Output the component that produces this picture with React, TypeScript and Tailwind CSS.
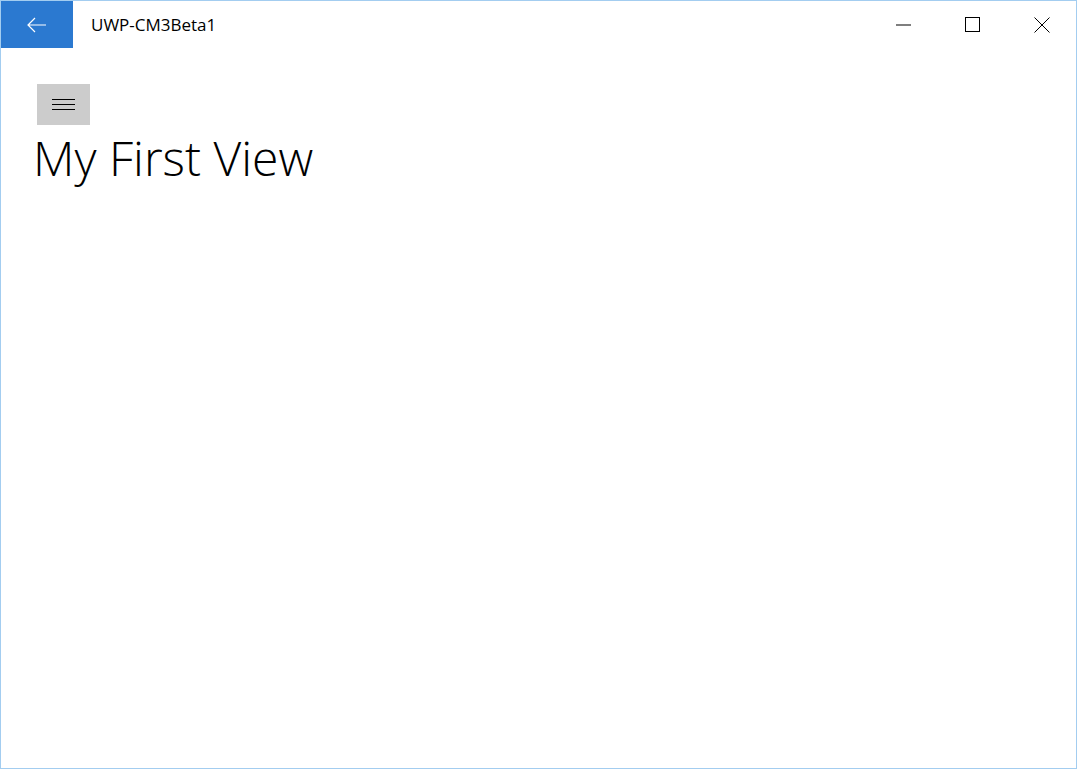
import React from 'react';

const TitleButton = ({ children }: { children: React.ReactNode }) => (
  <div className="w-[69px] h-full flex items-center justify-center">{children}</div>
);

const App = () => {
  return (
    <div className="w-[1077px] h-[769px] border border-[#a3cdf0] bg-white flex flex-col overflow-hidden" style={{ fontFamily: '"Open Sans", "Noto Sans", sans-serif' }}>
      <div className="h-[47px] flex items-stretch shrink-0">
        <div className="w-[72px] bg-[#2b79d0] flex items-center justify-center">
          <svg width="20" height="16" viewBox="0 0 20 16" fill="none" stroke="white" strokeWidth="1.2">
            <path d="M1 8h18M8 1L1 8l7 7" />
          </svg>
        </div>
        <div className="pl-[18px] flex items-center text-[17px] text-black">UWP-CM3Beta1</div>
        <div className="flex-1" />
        <div className="flex">
          <TitleButton>
            <svg width="16" height="2" viewBox="0 0 16 2"><rect x="0" y="0.5" width="15" height="1" fill="black" /></svg>
          </TitleButton>
          <TitleButton>
            <svg width="16" height="16" viewBox="0 0 16 16" fill="none" stroke="black" strokeWidth="1">
              <rect x="0.5" y="0.5" width="14" height="14" />
            </svg>
          </TitleButton>
          <TitleButton>
            <svg width="16" height="16" viewBox="0 0 16 16" fill="none" stroke="black" strokeWidth="1">
              <path d="M0.5 0.5l15 15M15.5 0.5l-15 15" />
            </svg>
          </TitleButton>
        </div>
      </div>
      <div className="pl-[36px] pt-[36px] flex flex-col items-start">
        <div className="w-[53px] h-[41px] bg-[#cccccc] flex flex-col items-center justify-center gap-[4px]">
          <div className="w-[23px] h-[1px] bg-black" />
          <div className="w-[23px] h-[1px] bg-black" />
          <div className="w-[23px] h-[1px] bg-black" />
        </div>
        <div className="text-[48px] font-light text-black leading-[56px] -ml-[4px] mt-[5px]">My First View</div>
      </div>
    </div>
  );
};

export default App;
